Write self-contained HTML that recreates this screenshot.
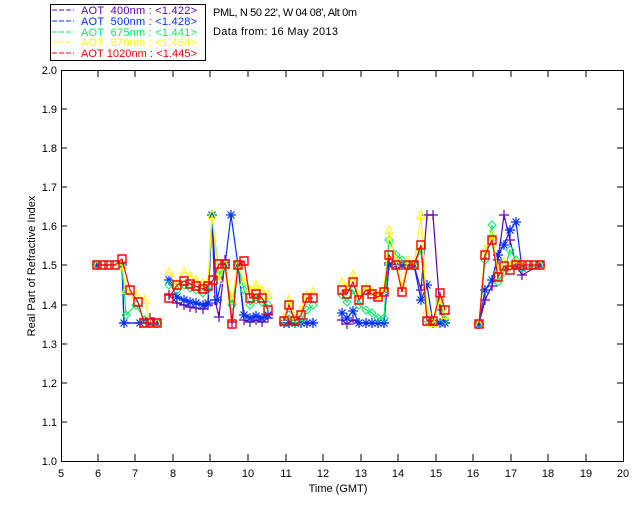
<!DOCTYPE html>
<html><head><meta charset="utf-8"><style>
html,body{margin:0;padding:0;background:#fff;width:640px;height:512px;overflow:hidden}
svg{display:block}
text{font-family:"Liberation Sans",sans-serif;font-size:11px;white-space:pre}
</style></head><body>
<svg width="640" height="512" viewBox="0 0 640 512">
<defs>
<marker id="mP" markerUnits="userSpaceOnUse" markerWidth="12" markerHeight="12" refX="6" refY="6" overflow="visible"><path d="M1 6h10M6 1v10" stroke="#6000b0" stroke-width="1.2" fill="none"/></marker>
<marker id="mB" markerUnits="userSpaceOnUse" markerWidth="12" markerHeight="12" refX="6" refY="6" overflow="visible"><path d="M1 6h10M6 1v10M2.5 2.5l7 7M9.5 2.5l-7 7" stroke="#0030ff" stroke-width="1.2" fill="none"/></marker>
<marker id="mG" markerUnits="userSpaceOnUse" markerWidth="12" markerHeight="12" refX="6" refY="6" overflow="visible"><path d="M6 2l4 4-4 4-4-4z" stroke="#00ee66" stroke-width="1" fill="none"/></marker>
<marker id="mY" markerUnits="userSpaceOnUse" markerWidth="12" markerHeight="12" refX="6" refY="6" overflow="visible"><path d="M6 1.5l4 8h-8z" stroke="#ffff00" stroke-width="1" fill="none"/></marker>
</defs>
<!-- legend -->
<rect x="50.5" y="4.5" width="155" height="56" fill="none" stroke="#000"/>
<g font-size="11">
<line x1="52" y1="10" x2="74" y2="10" stroke="#6000b0" stroke-dasharray="5,2"/>
<text x="81" y="14" fill="#6000b0" textLength="116">AOT  400nm : &lt;1.422&gt;</text>
<line x1="52" y1="21" x2="74" y2="21" stroke="#0030ff" stroke-dasharray="5,2"/>
<text x="81" y="25" fill="#0030ff" textLength="116">AOT  500nm : &lt;1.428&gt;</text>
<line x1="52" y1="32" x2="74" y2="32" stroke="#00ee66" stroke-dasharray="5,2"/>
<text x="81" y="36" fill="#00ee66" textLength="116">AOT  675nm : &lt;1.441&gt;</text>
<line x1="52" y1="42" x2="74" y2="42" stroke="#ffff00" stroke-dasharray="5,2"/>
<text x="81" y="46" fill="#ffff00" textLength="116">AOT  870nm : &lt;1.454&gt;</text>
<line x1="52" y1="53" x2="74" y2="53" stroke="#ff0000" stroke-dasharray="5,2"/>
<text x="81" y="57" fill="#ff0000" textLength="116">AOT 1020nm : &lt;1.445&gt;</text>
</g>
<text x="213" y="16" textLength="144">PML, N 50 22', W 04 08', Alt 0m</text>
<text x="213" y="35" textLength="125">Data from: 16 May 2013</text>
<!-- axes -->
<rect x="61.5" y="70.5" width="562" height="391" fill="none" stroke="#000"/>
<g stroke="#000">
<path d="M98 461v-7M135 461v-7M173 461v-7M210 461v-7M248 461v-7M286 461v-7M323 461v-7M361 461v-7M398 461v-7M436 461v-7M473 461v-7M511 461v-7M548 461v-7M586 461v-7
M98 70v7M135 70v7M173 70v7M210 70v7M248 70v7M286 70v7M323 70v7M361 70v7M398 70v7M436 70v7M473 70v7M511 70v7M548 70v7M586 70v7
M61 109h6M61 148h6M61 187h6M61 226h6M61 265h6M61 305h6M61 344h6M61 383h6M61 422h6
M623 109h-6M623 148h-6M623 187h-6M623 226h-6M623 265h-6M623 305h-6M623 344h-6M623 383h-6M623 422h-6"/>
</g>
<g text-anchor="end" font-size="10">
<text x="57" y="465">1.0</text><text x="57" y="426">1.1</text><text x="57" y="387">1.2</text><text x="57" y="348">1.3</text><text x="57" y="309">1.4</text><text x="57" y="269">1.5</text><text x="57" y="230">1.6</text><text x="57" y="191">1.7</text><text x="57" y="152">1.8</text><text x="57" y="113">1.9</text><text x="57" y="74">2.0</text>
</g>
<g text-anchor="middle" font-size="10">
<text x="61" y="477">5</text><text x="98" y="477">6</text><text x="135" y="477">7</text><text x="173" y="477">8</text><text x="210" y="477">9</text><text x="248" y="477">10</text><text x="286" y="477">11</text><text x="323" y="477">12</text><text x="361" y="477">13</text><text x="398" y="477">14</text><text x="436" y="477">15</text><text x="473" y="477">16</text><text x="511" y="477">17</text><text x="548" y="477">18</text><text x="586" y="477">19</text><text x="623" y="477">20</text>
<text x="338" y="492">Time (GMT)</text>
</g>
<text transform="translate(35 266) rotate(-90)" text-anchor="middle" font-size="10">Real Part of Refractive Index</text>
<!-- data -->
<g fill="none" stroke-width="1.2">
<g stroke="#6000b0" marker-start="url(#mP)" marker-mid="url(#mP)" marker-end="url(#mP)">
<polyline points="97,265 122,265 124,323 140,323 150,318 157,323"/>
<polyline points="169,295 177,303 184,305 190,307 196,308 203,309 208,305 212,215 215,300 219,317 225,260 232,322 238,265 244,320 250,322 256,320 262,322 268,318"/>
<polyline points="284,323 289,323 295,323 301,323 307,323 313,323"/>
<polyline points="342,320 347,324 353,320 359,323 366,323 372,323 378,323 384,323 389,263 396,265 402,265 408,265 414,265 421,290 427,215 433,215 440,310 445,323"/>
<polyline points="479,324 485,300 492,286 498,260 504,215 510,240 516,265 522,275 540,265"/>
</g>
<g stroke="#0030ff" marker-start="url(#mB)" marker-mid="url(#mB)" marker-end="url(#mB)">
<polyline points="97,265 122,265 124,323 140,323 150,323 157,323"/>
<polyline points="169,280 177,297 184,300 190,302 196,303 203,305 208,303 212,215 217,300 225,265 231,215 238,265 244,315 250,318 256,316 262,318 268,315"/>
<polyline points="284,323 289,323 295,323 301,323 307,323 313,323"/>
<polyline points="342,313 347,318 353,311 359,323 366,323 372,323 378,323 384,323 389,265 396,265 402,265 408,265 414,265 421,300 427,285 433,323 440,323 445,323"/>
<polyline points="479,324 485,290 492,280 498,255 504,245 510,230 516,222 522,268 540,265"/>
</g>
<g stroke="#00ee66" marker-start="url(#mG)" marker-mid="url(#mG)" marker-end="url(#mG)">
<polyline points="97,265 122,265 126,315 136,305 145,320 150,323 157,323"/>
<polyline points="169,285 177,290 184,285 190,288 196,290 203,293 208,290 212,215 219,275 225,265 232,305 238,265 244,290 250,305 256,300 262,302 268,305"/>
<polyline points="284,320 289,315 295,323 301,320 307,310 313,305"/>
<polyline points="342,295 347,302 353,290 359,305 366,310 372,313 378,318 384,318 389,240 396,255 402,260 408,265 414,265 421,250 427,320 433,323 440,300 445,320"/>
<polyline points="479,324 485,260 492,225 498,282 504,272 510,250 516,260 522,268 540,265"/>
</g>
<g stroke="#ffff00" marker-start="url(#mY)" marker-mid="url(#mY)" marker-end="url(#mY)">
<polyline points="97,265 122,265 126,290 136,295 145,300 150,323 157,323"/>
<polyline points="169,272 177,285 184,272 190,276 196,280 203,283 208,282 212,215 219,280 225,265 232,300 238,265 244,282 250,290 256,285 262,290 268,295"/>
<polyline points="284,318 289,300 295,318 301,310 307,295 313,292"/>
<polyline points="342,282 347,288 353,275 359,295 366,288 372,292 378,295 384,290 389,230 396,262 402,288 408,260 414,265 421,215 427,310 433,323 440,300 445,315"/>
<polyline points="479,324 485,250 492,235 498,270 504,262 510,265 516,262 522,265 540,265"/>
</g>
<g stroke="#ff0000">
<polyline points="97,265 115,265 122,259 130,290 138,302 144,323 157,323"/>
<polyline points="169,298 177,285 184,281 190,284 196,286 203,289 208,286 213,280 219,264 225,264 232,324 238,265 244,261 250,298 256,294 262,298 268,310"/>
<polyline points="284,321 289,305 295,321 301,315 307,298 313,298"/>
<polyline points="342,290 347,294 353,282 359,300 366,290 372,294 378,297 384,292 389,255 396,265 402,292 408,265 414,265 421,245 427,321 433,321 440,293 445,310"/>
<polyline points="479,324 485,255 492,240 498,277 504,266 510,270 516,265 540,265"/>
</g>
<g stroke="#ff0000" stroke-width="1.4">
<path d="M93 261h8v8h-8zM99 261h8v8h-8zM105 261h8v8h-8zM111 261h8v8h-8zM118 255h8v8h-8zM126 286h8v8h-8zM134 298h8v8h-8zM140 319h8v8h-8zM146 319h8v8h-8zM153 319h8v8h-8z
M165 294h8v8h-8zM173 281h8v8h-8zM180 277h8v8h-8zM186 280h8v8h-8zM192 282h8v8h-8zM199 285h8v8h-8zM204 282h8v8h-8zM209 276h8v8h-8zM215 260h8v8h-8zM221 260h8v8h-8zM228 320h8v8h-8zM234 261h8v8h-8zM240 257h8v8h-8zM246 294h8v8h-8zM252 290h8v8h-8zM258 294h8v8h-8zM264 306h8v8h-8z
M280 317h8v8h-8zM285 301h8v8h-8zM291 317h8v8h-8zM297 311h8v8h-8zM303 294h8v8h-8zM309 294h8v8h-8z
M338 286h8v8h-8zM343 290h8v8h-8zM349 278h8v8h-8zM355 296h8v8h-8zM362 286h8v8h-8zM368 290h8v8h-8zM374 293h8v8h-8zM380 288h8v8h-8zM385 251h8v8h-8zM392 261h8v8h-8zM398 288h8v8h-8zM404 261h8v8h-8zM410 261h8v8h-8zM417 241h8v8h-8zM423 317h8v8h-8zM429 317h8v8h-8zM436 289h8v8h-8zM441 306h8v8h-8z
M475 320h8v8h-8zM481 251h8v8h-8zM488 236h8v8h-8zM494 273h8v8h-8zM500 262h8v8h-8zM506 266h8v8h-8zM512 261h8v8h-8zM518 261h8v8h-8zM524 261h8v8h-8zM530 261h8v8h-8zM536 261h8v8h-8z"/>
</g>
</g>
</svg>
</body></html>
